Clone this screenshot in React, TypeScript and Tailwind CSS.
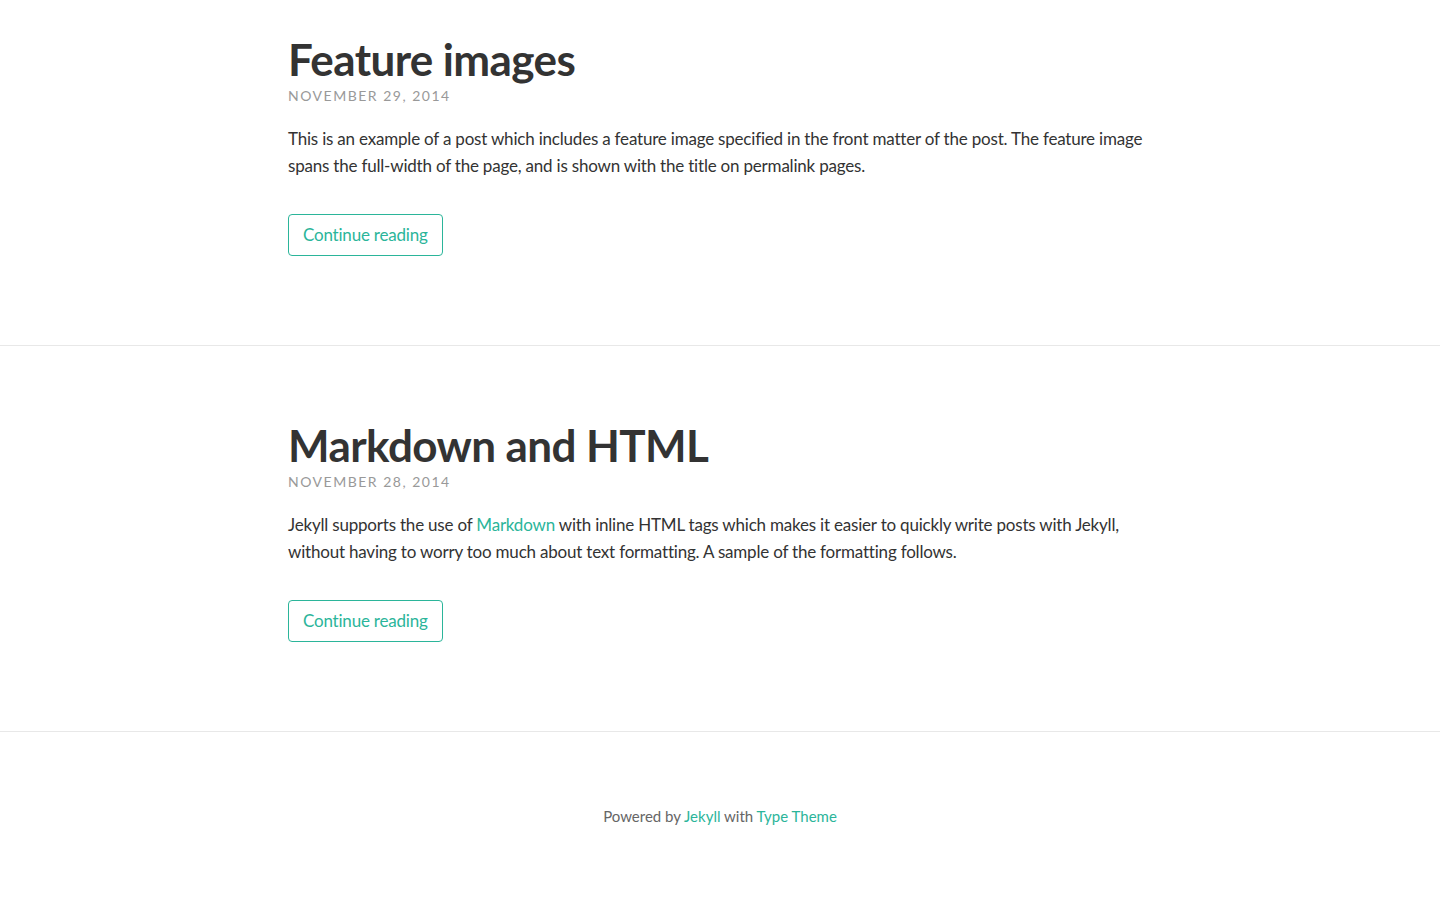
const teal = 'text-[#2bb59a]';

interface PostProps {
  title: string;
  date: string;
  children: React.ReactNode;
  first?: boolean;
}

function Post({ title, date, children, first }: PostProps) {
  return (
    <article
      className={
        first
          ? 'border-b border-[#e8e8e8] pt-[35px] pb-[89px]'
          : 'border-b border-[#e8e8e8] pt-[75px] pb-[89px]'
      }
    >
      <div className="mx-auto w-[864px]">
        <h1 className="text-[44px] font-bold leading-[48px] tracking-[-0.6px] text-[#333]">
          {title}
        </h1>
        <p className="mt-[3px] text-[14px] uppercase leading-[20px] tracking-[1.5px] text-[#999]">
          {date}
        </p>
        <p className="mt-[19px] text-[17px] leading-[27px] tracking-[-0.2px] text-[#333]">
          {children}
        </p>
        <a
          href="#"
          className={`mt-[35px] inline-flex h-[42px] items-center rounded-[4px] border border-[#2bb59a] px-[14px] text-[17px] tracking-[-0.2px] ${teal}`}
        >
          Continue reading
        </a>
      </div>
    </article>
  );
}

export default function App() {
  return (
    <div className="min-h-[900px] bg-white font-['Lato',sans-serif] antialiased">
      <main>
        <Post title="Feature images" date="November 29, 2014" first>
          This is an example of a post which includes a feature image specified
          in the front matter of the post. The feature image spans the
          full-width of the page, and is shown with the title on permalink
          pages.
        </Post>
        <Post title="Markdown and HTML" date="November 28, 2014">
          Jekyll supports the use of{' '}
          <a href="#" className={teal}>
            Markdown
          </a>{' '}
          with inline HTML tags which makes it easier to quickly write posts
          with Jekyll, without having to worry too much about text formatting.
          A sample of the formatting follows.
        </Post>
      </main>
      <footer className="pt-[72px] pb-[60px] text-center text-[15px] leading-[24px] text-[#666]">
        Powered by{' '}
        <a href="#" className={teal}>
          Jekyll
        </a>{' '}
        with{' '}
        <a href="#" className={teal}>
          Type Theme
        </a>
      </footer>
    </div>
  );
}
